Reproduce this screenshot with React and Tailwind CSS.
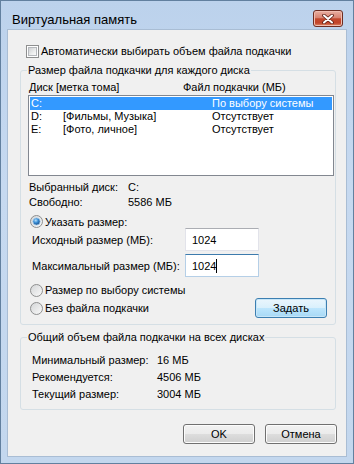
import React from 'react';

const font = { fontFamily: '"Liberation Sans", Arial, sans-serif' };

const Checkbox = () => (
  <span className="flex h-[13px] w-[13px] shrink-0 items-center justify-center border border-[#8e8f8f] bg-white">
    <span className="h-[9px] w-[9px] border border-[#b5b8bc] bg-[linear-gradient(135deg,#cfd1d3_0%,#eceded_60%,#fbfbfb_100%)]" />
  </span>
);

const Radio = ({ checked }) => (
  <svg width="13" height="13" viewBox="0 0 13 13" className="shrink-0">
    <defs>
      <linearGradient id="rb" x1="0" y1="0" x2="1" y2="1">
        <stop offset="0" stopColor="#d2d4d6" />
        <stop offset="1" stopColor="#fbfbfb" />
      </linearGradient>
      <radialGradient id="rd" cx="0.4" cy="0.35" r="0.7">
        <stop offset="0" stopColor="#b8e0fb" />
        <stop offset="0.45" stopColor="#3a8fd6" />
        <stop offset="1" stopColor="#123f7a" />
      </radialGradient>
    </defs>
    <circle cx="6.5" cy="6.5" r="6" fill="url(#rb)" stroke="#8e8f8f" />
    {checked && <circle cx="6.5" cy="6.5" r="3.6" fill="url(#rd)" stroke="#9cc6e8" strokeWidth="0.8" />}
  </svg>
);

const Button = ({ children, isDefault }) => (
  <button
    className={
      isDefault
        ? 'flex h-[20px] w-[72px] items-center justify-center rounded-[3px] border border-[#3c7fb1] bg-[linear-gradient(to_bottom,#eaf6fd_0%,#d9f0fc_50%,#bee6fd_50%,#a7d9f5_100%)] text-[11px] leading-[14px] text-black shadow-[inset_0_0_0_1px_#c7e6f8]'
        : 'flex h-[20px] w-[72px] items-center justify-center rounded-[3px] border border-[#707070] bg-[linear-gradient(to_bottom,#f2f2f2_0%,#ebebeb_50%,#dddddd_50%,#cfcfcf_100%)] text-[11px] leading-[14px] text-black shadow-[inset_0_0_0_1px_#fcfcfc]'
    }
  >
    {children}
  </button>
);

const drives = [
  { d: 'C:', label: '', size: 'По выбору системы', selected: true },
  { d: 'D:', label: '[Фильмы, Музыка]', size: 'Отсутствует' },
  { d: 'E:', label: '[Фото, личное]', size: 'Отсутствует' },
];

export default function App() {
  return (
    <div
      style={font}
      className="flex h-[464px] w-[354px] flex-col whitespace-nowrap border border-[#62809f] bg-[linear-gradient(to_bottom,#bcd2ec_0%,#c6d9f0_40%,#c3d7ee_100%)] text-[11px] leading-[14px] text-black"
    >
      <div className="flex h-[29px] shrink-0 items-start justify-between">
        <span className="ml-[11px] mt-[12px] text-[13px] leading-[14px] text-black">Виртуальная память</span>
        <button className="mr-[10px] mt-[9px] flex h-[17px] w-[30px] items-center justify-center rounded-[3px] border border-[#6d2d22] bg-[linear-gradient(to_bottom,#e9b0a2_0%,#d88371_45%,#c2482c_52%,#c2442a_80%,#dc8e6a_100%)] shadow-[inset_0_0_0_1px_#f0bdb0]">
          <svg width="12" height="10" viewBox="0 0 12 10">
            <path d="M2 1.5 L10 8.5 M10 1.5 L2 8.5" stroke="#5a1c12" strokeWidth="3.6" strokeLinecap="round" />
            <path d="M2 1.5 L10 8.5 M10 1.5 L2 8.5" stroke="#ffffff" strokeWidth="2" strokeLinecap="round" />
          </svg>
        </button>
      </div>

      <div className="mx-[7px] mb-[7px] flex flex-1 flex-col bg-[#f0f0f0] shadow-[0_0_0_1px_#a9bdd4]">
        <div className="ml-[18px] mt-[14px] flex h-[14px] items-center gap-[2px]">
          <Checkbox />
          <span>Автоматически выбирать объем файла подкачки</span>
        </div>

        <fieldset className="ml-[12px] mt-[5px] w-[316px] rounded-[3px] border border-[#d5dfe5] pl-[6px] pr-[1px]">
          <legend className="px-[1px] leading-[14px]">Размер файла подкачки для каждого диска</legend>
          <div className="flex flex-col pb-[6px]">
            <div className="ml-[2px] mt-[3px] flex h-[14px]">
              <span className="w-[154px]">Диск [метка тома]</span>
              <span>Файл подкачки (МБ)</span>
            </div>
            <div className="ml-[1px] mt-[1px] h-[81px] border border-[#828790] bg-white px-[1px] pt-[1px]">
              {drives.map((r) => (
                <div
                  key={r.d}
                  className={
                    r.selected
                      ? 'grid h-[13px] grid-cols-[32px_149px_1fr] bg-[#3399ff] pl-[1px] leading-[13px] text-white'
                      : 'grid h-[13px] grid-cols-[32px_149px_1fr] pl-[1px] leading-[13px]'
                  }
                >
                  <span>{r.d}</span>
                  <span>{r.label}</span>
                  <span>{r.size}</span>
                </div>
              ))}
            </div>
            <div className="ml-[2px] mt-[4px] flex h-[14px]">
              <span className="w-[99px]">Выбранный диск:</span>
              <span>C:</span>
            </div>
            <div className="ml-[2px] mt-[1px] flex h-[14px]">
              <span className="w-[99px]">Свободно:</span>
              <span>5586 МБ</span>
            </div>
            <div className="ml-[3px] mt-[6px] flex h-[13px] items-center gap-[2px]">
              <Radio checked />
              <span>Указать размер:</span>
            </div>
            <div className="ml-[5px] flex h-[23px] items-center">
              <span className="w-[153px]">Исходный размер (МБ):</span>
              <div className="flex h-[23px] w-[74px] items-center border border-[#e2e3ea] border-t-[#abadb3] bg-white pl-[6px]">
                1024
              </div>
            </div>
            <div className="ml-[5px] mt-[3px] flex h-[23px] items-center">
              <span className="w-[153px]">Максимальный размер (МБ):</span>
              <div className="flex h-[23px] w-[74px] items-center border border-[#b5cfe7] border-t-[#3d7bad] bg-white pl-[6px]">
                1024
                <span className="h-[14px] w-px bg-black" />
              </div>
            </div>
            <div className="ml-[3px] mt-[6px] flex h-[14px] items-center gap-[2px]">
              <Radio />
              <span>Размер по выбору системы</span>
            </div>
            <div className="ml-[3px] mr-[7px] mt-[1px] flex h-[20px] items-center justify-between">
              <div className="flex items-center gap-[2px]">
                <Radio />
                <span>Без файла подкачки</span>
              </div>
              <Button isDefault>Задать</Button>
            </div>
          </div>
        </fieldset>

        <fieldset className="ml-[12px] mt-[5px] w-[316px] rounded-[3px] border border-[#d5dfe5] pl-[6px] pr-[1px]">
          <legend className="px-[1px] leading-[14px]">Общий объем файла подкачки на всех дисках</legend>
          <div className="ml-[5px] mt-[7px] flex flex-col pb-[7px]">
            <div className="flex h-[17px] items-center">
              <span className="w-[125px]">Минимальный размер:</span>
              <span>16 МБ</span>
            </div>
            <div className="flex h-[17px] items-center">
              <span className="w-[125px]">Рекомендуется:</span>
              <span>4506 МБ</span>
            </div>
            <div className="flex h-[17px] items-center">
              <span className="w-[125px]">Текущий размер:</span>
              <span>3004 МБ</span>
            </div>
          </div>
        </fieldset>

        <div className="mt-[14px] flex justify-end gap-[10px] pr-[9px]">
          <Button>OK</Button>
          <Button>Отмена</Button>
        </div>
      </div>
    </div>
  );
}
